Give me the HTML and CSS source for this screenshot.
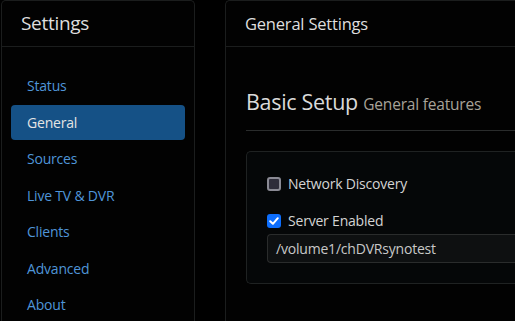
FILE: index.html
```html
<!DOCTYPE html>
<html>
<head>
<meta charset="utf-8">
<link rel="stylesheet" href="styles.css">
</head>
<body>
<div class="layout">
  <aside class="panel side">
    <div class="panel-head">Settings</div>
    <nav class="nav">
      <a class="nav-item">Status</a>
      <a class="nav-item active">General</a>
      <a class="nav-item">Sources</a>
      <a class="nav-item">Live TV &amp; DVR</a>
      <a class="nav-item">Clients</a>
      <a class="nav-item">Advanced</a>
      <a class="nav-item">About</a>
    </nav>
  </aside>
  <main class="panel main">
    <div class="panel-head main-head">General Settings</div>
    <div class="main-body">
      <h2 class="section-title">Basic Setup <small>General features</small></h2>
      <hr class="rule">
      <div class="card">
        <label class="check-row"><span class="box"></span>Network Discovery</label>
        <label class="check-row second"><span class="box checked"><svg viewBox="0 0 14 14" width="14" height="14"><path d="M3.2 7.2 L5.9 9.8 L10.8 4.2" fill="none" stroke="#fff" stroke-width="2" stroke-linecap="round" stroke-linejoin="round"/></svg></span>Server Enabled</label>
        <div class="input">/volume1/chDVRsynotest</div>
      </div>
    </div>
  </main>
</div>
</body>
</html>
```

FILE: styles.css
```css
html, body {
  margin: 0;
  padding: 0;
  background: #000;
  height: 100%;
  overflow: hidden;
}
body {
  font-family: "Open Sans", "Noto Sans", sans-serif;
  color: #dcdcdc;
}
.layout {
  display: flex;
  gap: 30px;
  padding-left: 1px;
  height: 100%;
  box-sizing: border-box;
}
.panel {
  background: #020202;
  border: 1px solid #1b1d1d;
  border-bottom: none;
  box-sizing: border-box;
  height: 100%;
  overflow: hidden;
}
.side {
  width: 194px;
  flex: none;
  border-radius: 5px 5px 0 0;
}
.main {
  flex: 1;
  min-width: 0;
  border-right: none;
  border-radius: 5px 0 0 0;
}
.panel-head {
  height: 46px;
  box-sizing: border-box;
  border-bottom: 1px solid #1b1d1d;
  padding-left: 19px;
  font-size: 19px;
  line-height: 45px;
  color: #dedede;
  letter-spacing: -0.3px;
}
.main-head {
  padding-left: 19px;
  font-size: 16.5px;
  letter-spacing: -0.2px;
}
.nav {
  display: flex;
  flex-direction: column;
  padding: 21px 9px 0 9px;
  gap: 1.5px;
}
.nav-item {
  display: block;
  height: 35px;
  line-height: 35px;
  padding-left: 16px;
  font-size: 14px;
  color: #4f95d8;
  border-radius: 4px;
  letter-spacing: -0.2px;
}
.nav-item.active {
  background: #155186;
  color: #e4e4e4;
}
.main-body {
  padding: 0 0 0 20px;
}
.section-title {
  margin: 0;
  padding-top: 40px;
  font-weight: normal;
  font-size: 21.5px;
  line-height: 30px;
  color: #dadada;
  letter-spacing: -0.3px;
}
.section-title small {
  font-size: 15.5px;
  color: #a7a399;
  letter-spacing: -0.2px;
}
.rule {
  margin: 11px 0 0 0;
  border: none;
  border-top: 1px solid #2a2c2c;
  height: 0;
}
.card {
  margin-top: 20px;
  background: #050708;
  border: 1px solid #1f2222;
  border-right: none;
  border-radius: 5px 0 0 5px;
  padding: 21px 0 20px 20px;
  display: flex;
  flex-direction: column;
}
.check-row {
  display: flex;
  align-items: center;
  gap: 7px;
  height: 21px;
  font-size: 14px;
  color: #d4d4d4;
  letter-spacing: -0.2px;
}
.check-row.second {
  margin-top: 16px;
}
.box {
  width: 14px;
  height: 14px;
  box-sizing: border-box;
  border: 2px solid #8a8a94;
  background: #2e2d3a;
  border-radius: 3px;
  display: flex;
  align-items: center;
  justify-content: center;
  flex: none;
}
.box.checked {
  border: none;
  background: #0d6efd;
}
.input {
  margin-top: 3px;
  height: 29px;
  box-sizing: border-box;
  border: 1px solid #2a2c2c;
  border-right: none;
  border-radius: 4px 0 0 4px;
  background: #0e1011;
  padding-left: 8px;
  line-height: 27px;
  font-size: 14px;
  color: #c8c8c8;
  letter-spacing: -0.2px;
}
```
